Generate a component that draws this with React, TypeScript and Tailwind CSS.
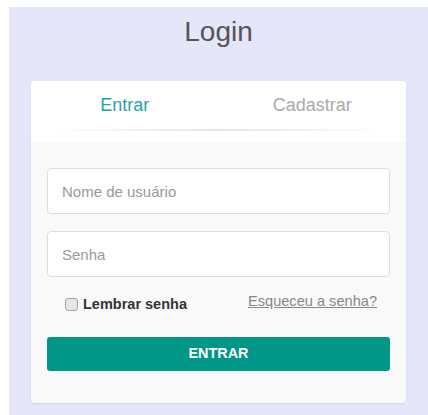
import { useState } from "react";

export default function App() {
  const [tab, setTab] = useState<"entrar" | "cadastrar">("entrar");

  return (
    <div className="h-[415px] bg-white pt-[7px] pl-[9px] font-['Liberation_Sans',Arial,sans-serif]">
      <div className="h-full bg-[#e6e6fa] flex flex-col items-center pt-[9px]">
        <h1 className="text-[28px] leading-[32px] text-[#555]">Login</h1>

        <div className="mt-[33px] w-[375px] rounded-[4px] bg-[#f9f9f9] shadow-[0_1px_2px_rgba(0,0,0,0.08)] overflow-hidden">
          {/* tabs */}
          <div className="bg-white pt-[14px] pb-[11px]">
            <div className="flex">
              <button
                onClick={() => setTab("entrar")}
                className={`flex-1 text-[18px] leading-[20px] ${tab === "entrar" ? "text-[#26a69a]" : "text-[#aaa]"}`}
              >
                Entrar
              </button>
              <button
                onClick={() => setTab("cadastrar")}
                className={`flex-1 text-[18px] leading-[20px] ${tab === "cadastrar" ? "text-[#26a69a]" : "text-[#aaa]"}`}
              >
                Cadastrar
              </button>
            </div>
            <div className="mx-4 mt-[14px] h-[2px] bg-gradient-to-r from-transparent via-black/10 to-transparent" />
          </div>

          <form className="px-4 pt-[26px] pb-[32px]" onSubmit={(e) => e.preventDefault()}>
            <input
              placeholder="Nome de usuário"
              className="block w-full h-[46px] rounded-[4px] border border-[#ddd] bg-white pl-[14px] text-[15px] text-[#333] placeholder:text-[#999] outline-none"
            />
            <input
              type="password"
              placeholder="Senha"
              className="mt-[17px] block w-full h-[46px] rounded-[4px] border border-[#ddd] bg-white pl-[14px] text-[15px] text-[#333] placeholder:text-[#999] outline-none"
            />

            <div className="mt-[17px] flex justify-between pl-[18px] pr-[13px]">
              <label className="flex items-center gap-[5px] text-[14.5px] leading-[20px] font-bold text-[#333]">
                <input
                  type="checkbox"
                  className="appearance-none w-[13px] h-[13px] rounded-[3px] border border-[#a5a5a5] bg-[#e6e6e6] checked:bg-[#26a69a]"
                />
                Lembrar senha
              </label>
              <a href="#" className="text-[14.6px] leading-[20px] text-[#888] underline -mt-[3px]">
                Esqueceu a senha?
              </a>
            </div>

            <button className="mt-[23px] w-full h-[34px] rounded-[3px] bg-[#009688] text-white text-[14.4px] font-bold">
              ENTRAR
            </button>
          </form>
        </div>
      </div>
    </div>
  );
}
